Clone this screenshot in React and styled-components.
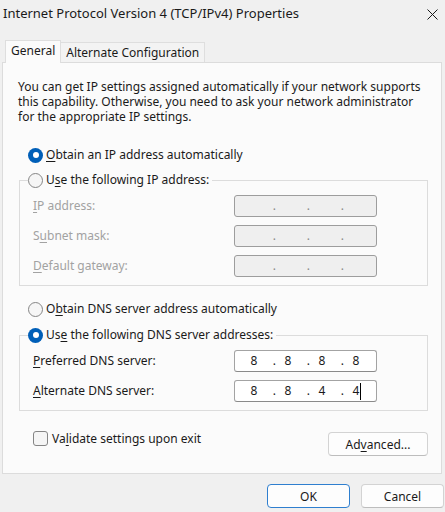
import React from "react";
import styled, { createGlobalStyle, css } from "styled-components";

const FONT = `"Noto Sans", "Open Sans", "Liberation Sans", sans-serif`;

const GlobalStyle = createGlobalStyle`
  html, body { margin: 0; padding: 0; background: #f0f0f0; }
  body { font-family: ${FONT}; font-size: 12px; color: #1a1a1a; }
  * { box-sizing: border-box; }
`;

const Window = styled.div`
  width: 445px;
  height: 512px;
  background: #f0f0f0;
  display: flex;
  flex-direction: column;
  overflow: hidden;
`;

const TitleBar = styled.div`
  height: 26px;
  display: flex;
  align-items: center;
  justify-content: space-between;
  padding: 0 7px 0 3px;
`;

const Title = styled.span`
  font-size: 13px;
  color: #1a1a1a;
  line-height: 16px;
`;

const CloseIcon = styled.svg`
  width: 11px;
  height: 11px;
  margin-top: 2px;
`;

const TabStrip = styled.div`
  display: flex;
  align-items: flex-end;
  height: 22px;
  margin-top: 14px;
  padding-left: 5px;
`;

const Tab = styled.div`
  display: flex;
  align-items: center;
  padding: 0 5px;
  font-size: 12px;
  border: 1px solid #dedede;
  border-bottom: none;
  ${(p) =>
    p.$active
      ? css`
          height: 23px;
          margin-bottom: -1px;
          background: #fbfbfb;
          padding-bottom: 4px;
          position: relative;
          z-index: 1;
        `
      : css`
          height: 20px;
          background: #f3f3f3;
          border-left: none;
        `}
`;

const Panel = styled.div`
  margin: 0 3px 0 2px;
  height: 412px;
  background: #fbfbfb;
  border: 1px solid #dcdcdc;
  padding: 16px 13px 0 16px;
  display: flex;
  flex-direction: column;
`;

const Intro = styled.p`
  margin: 0 0 0 -1px;
  line-height: 15px;
  color: #1a1a1a;
`;

const RadioRow = styled.label`
  display: flex;
  align-items: center;
  height: 16px;
  line-height: 16px;
  margin: ${(p) => p.$mt || 0}px 0 0 ${(p) => (p.$ml ?? 9)}px;
  white-space: nowrap;
`;

const RadioDot = styled.span`
  width: 15px;
  height: 15px;
  border-radius: 50%;
  flex: none;
  margin-right: 3px;
  display: flex;
  align-items: center;
  justify-content: center;
  ${(p) =>
    p.$checked
      ? css`
          background: #005fb8;
          &::after {
            content: "";
            width: 6px;
            height: 6px;
            border-radius: 50%;
            background: #ffffff;
          }
        `
      : css`
          background: #f6f6f6;
          border: 1px solid #858585;
        `}
`;

const Group = styled.fieldset`
  margin: ${(p) => p.$mt || 0}px 0 0 0;
  padding: 7px 0 8px 0;
  border: 1px solid #dcdcdc;
  min-width: 0;
`;

const Legend = styled.legend`
  margin-left: 8px;
  padding: 0 3px 0 0;
`;

const Rows = styled.div`
  display: grid;
  grid-template-columns: 201px 143px;
  row-gap: 8px;
  align-items: center;
  padding-left: 13px;
`;

const FieldLabel = styled.span`
  color: ${(p) => (p.$disabled ? "#a2a2a2" : "#1a1a1a")};
  line-height: 16px;
`;

const IpField = styled.div`
  width: 143px;
  height: 22px;
  border: 1px solid #a3a3a3;
  border-radius: 3px;
  display: flex;
  align-items: center;
  padding-left: 2px;
  ${(p) =>
    p.$disabled
      ? css`
          background-color: #efefef;
          background-image: radial-gradient(#e3e3e3 0.6px, transparent 0.7px);
          background-size: 2px 2px;
          border-color: #9d9d9d;
          color: #8a8a8a;
        `
      : css`
          background: #ffffff;
          border-bottom-color: #8a8a8a;
          color: #1a1a1a;
        `}
`;

const Octet = styled.span`
  width: 34px;
  text-align: center;
  line-height: 20px;
  display: flex;
  justify-content: center;
  align-items: center;
`;

const Dot = styled.span`
  width: 5px;
  margin-right: -5px;
  text-align: right;
  line-height: 20px;
`;

const Caret = styled.span`
  width: 1px;
  height: 17px;
  background: #000;
  margin-left: 1px;
  margin-right: -2px;
`;

const CheckRow = styled.div`
  display: flex;
  justify-content: space-between;
  align-items: flex-start;
  margin-top: 20px;
`;

const CheckLabel = styled.label`
  display: flex;
  align-items: center;
  margin-left: 14px;
  height: 15px;
  line-height: 16px;
`;

const CheckBox = styled.span`
  width: 15px;
  height: 15px;
  border: 1px solid #858585;
  border-radius: 3px;
  background: #f5f5f5;
  margin-right: 4px;
  flex: none;
`;

const Button = styled.button`
  font-family: ${FONT};
  font-size: 12px;
  color: #1a1a1a;
  height: 24px;
  width: ${(p) => p.$w || 83}px;
  margin-top: ${(p) => p.$mt || 0}px;
  border-radius: 4px;
  background: #fdfdfd;
  border: 1px solid #d3d3d3;
  border-bottom-color: #bdbdbd;
  padding: 0;
  display: flex;
  align-items: center;
  justify-content: center;
  ${(p) =>
    p.$primary &&
    css`
      border: 1px solid #2f7fcf;
    `}
`;

const Footer = styled.div`
  display: flex;
  justify-content: flex-end;
  gap: 11px;
  padding: 10px 1px 0 0;
`;

const U = styled.u`
  text-decoration: underline;
  text-underline-offset: 2px;
  text-decoration-thickness: 1px;
`;

function Radio({ checked, children, mt }) {
  return (
    <RadioRow $mt={mt}>
      <RadioDot $checked={checked} />
      <span>{children}</span>
    </RadioRow>
  );
}

function LegendRadio({ checked, children }) {
  return (
    <Legend>
      <RadioRow $ml={0}>
        <RadioDot $checked={checked} />
        <span>{children}</span>
      </RadioRow>
    </Legend>
  );
}

function Ip({ value, disabled, caret }) {
  const parts = value ? value.split(".") : ["", "", "", ""];
  return (
    <IpField $disabled={disabled}>
      {parts.map((p, i) => (
        <React.Fragment key={i}>
          <Octet>
            {p}
            {caret && i === 3 && <Caret />}
          </Octet>
          {i < 3 && <Dot>.</Dot>}
        </React.Fragment>
      ))}
    </IpField>
  );
}

export default function App() {
  return (
    <>
      <GlobalStyle />
      <Window>
        <TitleBar>
          <Title>Internet Protocol Version 4 (TCP/IPv4) Properties</Title>
          <CloseIcon viewBox="0 0 11 11">
            <path d="M0.5 0.5 L10.5 10.5 M10.5 0.5 L0.5 10.5" stroke="#1a1a1a" strokeWidth="1" fill="none" />
          </CloseIcon>
        </TitleBar>
        <TabStrip>
          <Tab $active>General</Tab>
          <Tab>Alternate Configuration</Tab>
        </TabStrip>
        <Panel>
          <Intro>
            You can get IP settings assigned automatically if your network supports
            <br />
            this capability. Otherwise, you need to ask your network administrator
            <br />
            for the appropriate IP settings.
          </Intro>

          <Radio checked mt={23}>
            <U>O</U>btain an IP address automatically
          </Radio>

          <Group $mt={9}>
            <LegendRadio>
              U<U>s</U>e the following IP address:
            </LegendRadio>
            <Rows>
              <FieldLabel $disabled>
                <U>I</U>P address:
              </FieldLabel>
              <Ip disabled />
              <FieldLabel $disabled>
                S<U>u</U>bnet mask:
              </FieldLabel>
              <Ip disabled />
              <FieldLabel $disabled>
                <U>D</U>efault gateway:
              </FieldLabel>
              <Ip disabled />
            </Rows>
          </Group>

          <Radio mt={15}>
            O<U>b</U>tain DNS server address automatically
          </Radio>

          <Group $mt={10}>
            <LegendRadio checked>
              Us<U>e</U> the following DNS server addresses:
            </LegendRadio>
            <Rows>
              <FieldLabel>
                <U>P</U>referred DNS server:
              </FieldLabel>
              <Ip value="8.8.8.8" />
              <FieldLabel>
                <U>A</U>lternate DNS server:
              </FieldLabel>
              <Ip value="8.8.4.4" caret />
            </Rows>
          </Group>

          <CheckRow>
            <CheckLabel>
              <CheckBox />
              <span>
                Va<U>l</U>idate settings upon exit
              </span>
            </CheckLabel>
            <Button $w={100} $mt={1}>
              <span>
                Ad<U>v</U>anced...
              </span>
            </Button>
          </CheckRow>
        </Panel>
        <Footer>
          <Button $primary>OK</Button>
          <Button>Cancel</Button>
        </Footer>
      </Window>
    </>
  );
}
